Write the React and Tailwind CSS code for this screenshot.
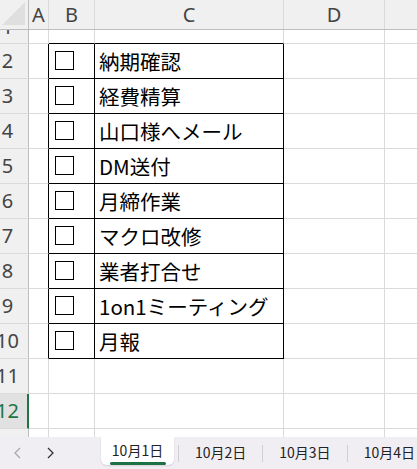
import React from "react";

const items = [
  "納期確認",
  "経費精算",
  "山口様へメール",
  "DM送付",
  "月締作業",
  "マクロ改修",
  "業者打合せ",
  "1on1ミーティング",
  "月報",
];

const FONT = { fontFamily: '"Noto Sans CJK JP", "Noto Sans", sans-serif' };
const UI = { fontFamily: '"Noto Sans", "Noto Sans CJK JP", sans-serif' };

export default function App() {
  const rows = [];
  rows.push(
    <div key="r1" className="flex h-[14px]">
      <div className="shrink-0 w-[29px] h-[14px] overflow-hidden border-r border-b border-r-[#bdbdbd] border-b-[#dadada] bg-[#f0f0f0] flex items-start">
        <div className="shrink-0 w-[41px] ml-[-13px] mt-[-13px] text-center text-[20px] leading-[20px] text-[#444]" style={UI}>
          1
        </div>
      </div>
      <div className="shrink-0 w-[20px] border-r border-b border-[#dadada]" />
      <div className="shrink-0 w-[46px] border-r border-b border-r-[#dadada] border-b-black" />
      <div className="shrink-0 w-[189px] border-r border-b border-r-[#dadada] border-b-black" />
      <div className="shrink-0 w-[101px] border-r border-b border-[#dadada]" />
      <div className="flex-1 border-b border-[#dadada]" />
    </div>
  );
  items.forEach((t, i) => {
    rows.push(
      <div key={t} className="flex h-[35px]">
        <div className="shrink-0 w-[29px] overflow-hidden border-r border-b border-r-[#bdbdbd] border-b-[#dadada] bg-[#f0f0f0] flex">
          <div className="shrink-0 w-[41px] ml-[-13px] text-center text-[20px] leading-[34px] text-[#444]" style={UI}>
            {i + 2}
          </div>
        </div>
        <div className="shrink-0 w-[20px] border-r border-b border-r-black border-b-[#dadada]" />
        <div className="shrink-0 w-[46px] border-r border-b border-black flex items-center pl-[6px]">
          <div className="w-[19px] h-[19px] border border-black bg-white mt-[-1px]" />
        </div>
        <div
          className="shrink-0 w-[189px] border-r border-b border-black flex items-center pl-[4px] text-[20.5px] text-black whitespace-nowrap overflow-hidden"
          style={FONT}
        >
          {t}
        </div>
        <div className="shrink-0 w-[101px] border-r border-b border-[#dadada]" />
        <div className="flex-1 border-b border-[#dadada]" />
      </div>
    );
  });
  [11, 12].forEach((n) => {
    const sel = n === 12;
    rows.push(
      <div key={n} className="flex h-[35px]">
        <div
          className={`shrink-0 w-[29px] overflow-hidden border-b border-b-[#dadada] flex ${
            sel ? "bg-[#e1e1e1] border-r-2 border-r-[#217346]" : "bg-[#f0f0f0] border-r border-r-[#bdbdbd]"
          }`}
        >
          <div
            className={`shrink-0 w-[41px] ml-[-13px] text-center text-[20px] leading-[34px] ${
              sel ? "text-[#217346]" : "text-[#444]"
            }`}
            style={UI}
          >
            {n}
          </div>
        </div>
        <div className="shrink-0 w-[20px] border-r border-b border-[#dadada]" />
        <div className="shrink-0 w-[46px] border-r border-b border-[#dadada]" />
        <div className="shrink-0 w-[189px] border-r border-b border-[#dadada]" />
        <div className="shrink-0 w-[101px] border-r border-b border-[#dadada]" />
        <div className="flex-1 border-b border-[#dadada]" />
      </div>
    );
  });
  rows.push(
    <div key="r13" className="flex h-[8px] shrink-0">
      <div className="shrink-0 w-[29px] border-r border-r-[#bdbdbd] bg-[#f0f0f0]" />
      <div className="shrink-0 w-[20px] border-r border-[#dadada]" />
      <div className="shrink-0 w-[46px] border-r border-[#dadada]" />
      <div className="shrink-0 w-[189px] border-r border-[#dadada]" />
      <div className="shrink-0 w-[101px] border-r border-[#dadada]" />
      <div className="flex-1" />
    </div>
  );

  const cols = [
    ["A", "w-[20px]"],
    ["B", "w-[46px]"],
    ["C", "w-[189px]"],
    ["D", "w-[101px]"],
  ];

  return (
    <div className="w-[417px] h-[469px] overflow-hidden bg-white flex flex-col">
      <div className="flex h-[30px] shrink-0 bg-[#f0f0f0] border-b border-b-[#bdbdbd]">
        <div className="shrink-0 w-[29px] border-r border-r-[#bdbdbd] flex items-end justify-end pr-[3px] pb-[4px]">
          <svg width="23" height="23" viewBox="0 0 23 23">
            <polygon points="23,0 23,23 0,23" fill="#dfdfdf" />
          </svg>
        </div>
        {cols.map(([c, w]) => (
          <div
            key={c}
            className={`shrink-0 ${w} border-r border-r-[#dadada] text-center text-[20px] leading-[29px] text-[#444]`}
            style={UI}
          >
            {c}
          </div>
        ))}
        <div className="flex-1" />
      </div>
      {rows}
      <div className="flex-1 bg-[#f0eef3] flex items-stretch text-[14px] text-[#222] whitespace-nowrap" style={FONT}>
        <div className="w-[101px] flex items-center shrink-0">
          <span className="ml-[13px]">
            <svg width="10" height="16" viewBox="0 0 10 16" className="block">
              <path d="M7 3 L2 8 L7 13" stroke="#a8a8a8" strokeWidth="1.3" fill="none" />
            </svg>
          </span>
          <span className="ml-[22px]">
            <svg width="10" height="16" viewBox="0 0 10 16" className="block">
              <path d="M3 3 L8 8 L3 13" stroke="#333" strokeWidth="1.3" fill="none" />
            </svg>
          </span>
        </div>
        <div className="w-[73px] shrink-0 bg-white rounded-b-[6px] flex flex-col items-center mb-[4px] shadow-[0_1px_2px_rgba(0,0,0,0.12)]">
          <div className="mt-[4px] leading-[19px]">10月1日</div>
          <div className="w-[56px] h-[3px] bg-[#1e7145] rounded-full mt-[2px]" />
        </div>
        <div className="flex items-center shrink-0">
          <div className="w-px h-[17px] bg-[#cfcfcf] ml-[4px] shrink-0" />
          <div className="px-[16px] mt-[-2px] shrink-0">10月2日</div>
          <div className="w-px h-[17px] bg-[#cfcfcf] shrink-0" />
          <div className="px-[16px] mt-[-2px] shrink-0">10月3日</div>
          <div className="w-px h-[17px] bg-[#cfcfcf] shrink-0" />
          <div className="px-[16px] mt-[-2px] shrink-0">10月4日</div>
        </div>
      </div>
    </div>
  );
}
